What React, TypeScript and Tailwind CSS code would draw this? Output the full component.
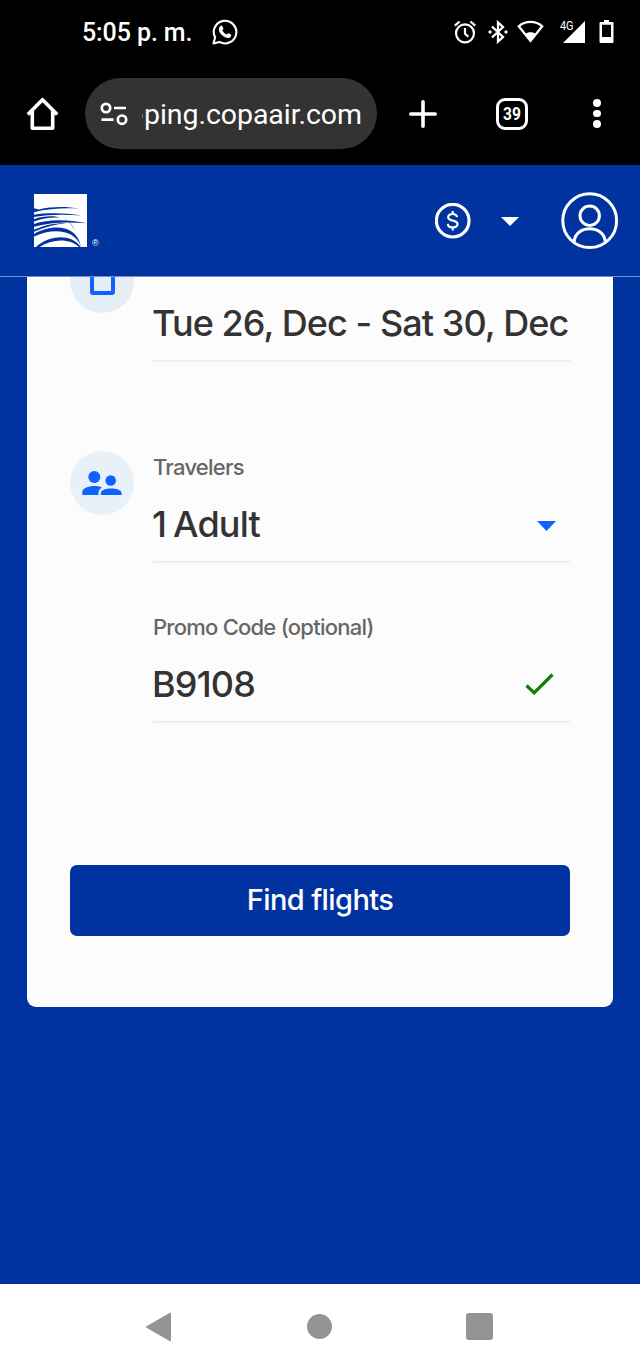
import type { ReactNode } from "react";

const StatusBar = () => {
    return (
        <div className="flex h-[64px] items-center pl-[82px] pr-[26px]">
            <span className="mt-[2px] w-[130px] whitespace-nowrap font-[Roboto] text-[25px] font-medium leading-8 tracking-[-0.1px]">5:05 p. m.</span>
            <svg className="h-[26px] w-[26px]" viewBox="0 0 26 26" fill="none">
                <path d="M1.5 24.5 3.1 18.4A11.3 11.3 0 1 1 7.5 22.9Z" stroke="#fff" strokeWidth="2.1" strokeLinejoin="round" />
                <path d="M8.7 6.8c.5-.5 1.3-.4 1.6.2l1.1 2.5c.2.5-.9 1.6-1 2 .8 1.8 2.4 3.2 4.2 4 .5-.1 1.4-1.5 1.9-1.3l2.5 1.3c.4.2.2 1.3-.2 1.9-1 1.6-3.1 1.9-4.9 1.2-3-1-5.7-3.6-6.7-6.3-.7-1.9-.2-4.2 1.5-5.5Z" fill="#fff" />
            </svg>
            <div className="ml-auto flex items-center">
                <svg className="h-6 w-[22px]" viewBox="0 0 22 24" fill="none" stroke="#fff" strokeWidth="2.2">
                    <circle cx="11" cy="13.3" r="9" />
                    <path d="M11 8v5.7l3.3 3M.8 5.6 5.6 1.5M21.2 5.6 16.4 1.5" />
                </svg>
                <svg className="ml-[12px] h-6 w-5" viewBox="0 0 20 24" fill="none" stroke="#fff" strokeWidth="2.3">
                    <path d="M4 6.5 15 17l-5 4.6V2.4L15 7 4 17.5" />
                    <circle cx="2" cy="12" r="1.2" fill="#fff" strokeWidth="1" />
                    <circle cx="18" cy="12" r="1.2" fill="#fff" strokeWidth="1" />
                </svg>
                <svg className="ml-[9px] h-6 w-[27px]" viewBox="0 0 27 24" fill="none">
                    <path d="M1.8 6.3C8.5.5 18.5.5 25.2 6.3L13.5 21Z" stroke="#fff" strokeWidth="2.2" />
                    <path d="M8 14.2c3-2.6 8-2.6 11 0L13.5 22Z" fill="#fff" />
                </svg>
                <div className="relative ml-[19px] h-6 w-[22px]">
                    <svg className="h-6 w-[22px]" viewBox="0 0 22 24">
                        <path d="M22 1v22H0Z" fill="#fff" />
                    </svg>
                    <span className="absolute -left-[3px] top-0 origin-left scale-x-[.84] font-[Roboto] text-[13px] leading-[12px] tracking-[-0.2px]">4G</span>
                </div>
                <svg className="ml-[14px] h-6 w-[15px]" viewBox="0 0 15 24">
                    <path fillRule="evenodd" d="M5 0h5v2h3.500q1 0 1 1v19q0 1-1 1h-12q-1 0-1-1V3q0-1 1-1H5ZM3 4.800V17h9V4.800Z" fill="#fff" />
                </svg>
            </div>
        </div>
    );
};

const BrowserBar = () => {
    return (
        <div className="mt-[14px] flex h-[71px] items-center">
            <svg className="ml-[26px] h-[34px] w-[33px]" viewBox="0 0 33 34" fill="none" stroke="#fff" strokeWidth="3.6" strokeLinejoin="round">
                <path d="M1.8 17.5 16.5 2.7 31.2 17.5M6.3 14v17.2h20.4V14" />
            </svg>
            <div className="ml-[26px] flex h-full w-[292px] items-center rounded-full bg-[#333333] pl-[15px]">
                <svg className="h-6 w-7" viewBox="0 0 28 24" fill="none" stroke="#fff" strokeWidth="2.7">
                    <circle cx="6" cy="6" r="4.2" />
                    <path d="M14 6h12M1.5 17.7h12" />
                    <circle cx="22" cy="17.7" r="4.2" />
                </svg>
                <span className="ml-[14px] mt-1 h-1 w-px bg-[#777]" />
                <span className="ml-px mt-[2px] whitespace-nowrap font-[Roboto] text-[28.5px] leading-9 tracking-[-0.06px]">ping.copaair.com</span>
            </div>
            <svg className="ml-8 h-7 w-7" viewBox="0 0 28 28" stroke="#fff" strokeWidth="3.6" strokeLinecap="round">
                <path d="M14 1.8v24.4M1.8 14h24.4" />
            </svg>
            <div className="ml-[59px] flex h-8 w-8 items-center justify-center rounded-[9px] border-[3.5px] border-white font-[Roboto] text-[19px] font-bold leading-none">
                <span className="-mt-px scale-x-[.82]">39</span>
            </div>
            <div className="ml-[65px] flex flex-col gap-[3px]">
                <span className="size-[7.5px] rounded-full bg-white" />
                <span className="size-[7.5px] rounded-full bg-white" />
                <span className="size-[7.5px] rounded-full bg-white" />
            </div>
        </div>
    );
};

const Logo = () => {
    return (
        <svg className="h-[53px] w-[53px]" viewBox="0 0 53 53" fill="#0032a0">
            <path d="M0 0h53v53H0Z" fill="#fff" />
            <path d="M0 14.3 5 15.4C18 12.4 33 12.3 45.500 14.8 33 13.700 15 14.500 0 18.200Z" />
            <path d="M0 20.700C13 18.600 31 18.700 47.500 21.600 31 20.300 14 20.600 0 23Z" />
            <path d="M0 25.200C9 22 19 21.500 26 23.600c-9-.6-17 .4-26 4Z" />
            <path d="M0 30C14 25 34 25.500 53 29.300 34 27.600 15 28.300 0 32.800Z" />
            <path d="M0 35.800C10 31 22 29 32 29 22 30.300 11 33 0 37.800Z" />
            <path d="M0 40C16 30.500 42 29 46.800 52 40.500 36 20 33.500 0 42.500Z" />
            <path d="M2 53C14 41.500 37 38.500 46.800 53h-1.800C36 44.200 18 44.500 5.500 53Z" />
            <path d="M15 16c11 3.500 22 11 26.500 21C35.500 27 27 19.500 15 16Z" />
        </svg>
    );
};

const SiteHeader = () => {
    return (
        <header className="flex h-[112px] items-center border-b border-[#6f8fd2] bg-[#0032a0] pl-[34px]">
            <Logo />
            <span className="ml-[5px] mt-[46px] w-[8px] font-['Liberation_Sans'] text-[9px] leading-none">®</span>
            <svg className="ml-[335px] h-9 w-9" viewBox="0 0 36 36" fill="none" stroke="#fff">
                <circle cx="17.7" cy="17.7" r="16.3" strokeWidth="3.2" />
                <path d="M22 14.2c-.3-2-2-3.200-4.500-3.200s-4.300 1.200-4.300 3.200c0 4.700 9.300 2 9.300 6.900 0 2-2 3.300-4.700 3.300-3 0-4.800-1.500-5-3.600M17.700 8v3M17.700 24.200v3.200" strokeWidth="2.2" />
            </svg>
            <svg className="ml-[30px] mt-[2px] h-[9px] w-[18px]" viewBox="0 0 18 9" fill="#fff">
                <path d="M0 0h18L9 9Z" />
            </svg>
            <svg className="ml-[42px] h-[58px] w-[58px]" viewBox="0 0 58 58" fill="none" stroke="#fff" strokeWidth="3">
                <circle cx="28.7" cy="28.7" r="26.9" />
                <circle cx="28.7" cy="23.700" r="9.7" />
                <path d="M13.2 50.200C13.2 32.400 44.2 32.400 44.2 50.200" />
            </svg>
        </header>
    );
};

type FieldProps = {
    label: string;
    value: string;
    icon?: ReactNode;
};

const Field = ({ label, value, icon }: FieldProps) => {
    return (
        <div className="h-[110px] w-[417px] border-b-2 border-[#eeeeee]">
            <p className="whitespace-nowrap text-[22px] font-medium leading-[29px] tracking-[-0.76px] text-[#666]">{label}</p>
            <div className="mt-[22px] flex h-10 items-center justify-between">
                <span className="-ml-px whitespace-nowrap text-[36px] font-medium leading-10 tracking-[-0.8px] [word-spacing:-2px]">{value}</span>
                {icon}
            </div>
        </div>
    );
};

const BookingCard = () => {
    return (
        <section className="mx-[27px] h-[730px] w-[586px] overflow-hidden rounded-b-[9px] bg-[#fcfcfc] px-[43px] font-[Inter] text-[#333]">
            <div className="flex">
                <div className="-mt-7 flex size-16 items-end justify-center rounded-full bg-[#e6eef5] pb-[18px]">
                    <div className="h-8 w-[25px] rounded-[3px] border-[4px] border-[#0f62fe]" />
                </div>
                <div className="ml-[19px] h-[85px] w-[417px] border-b-2 border-[#eeeeee] pt-[26px]">
                    <p className="-ml-px whitespace-nowrap text-[36px] font-medium leading-10 tracking-[-0.92px]">Tue 26, Dec - Sat 30, Dec</p>
                </div>
            </div>
            <div className="mt-[89px] flex">
                <div className="flex size-16 items-center justify-center rounded-full bg-[#e9f1f8]">
                    <svg className="h-6 w-10" viewBox="0 0 40 24" fill="#0f62fe">
                        <circle cx="12.3" cy="6" r="6" />
                        <circle cx="28.7" cy="9.5" r="5.3" />
                        <path d="M.3 24v-3.5C1 16 12 13 20 16.5c-2.7 1.500-4 3.800-3.500 7.500Z" />
                        <path d="M18.8 24v-2.300c.7-5.600 20-5.600 20.700 0V24Z" />
                    </svg>
                </div>
                <div className="ml-[19px] mt-[2px] flex flex-col gap-[50px]">
                    <Field
                        label="Travelers"
                        value="1 Adult"
                        icon={
                            <svg className="mr-[14px] mt-[3px] h-[10px] w-[19px]" viewBox="0 0 19 10" fill="#0f62fe">
                                <path d="M0 0h19L9.5 10Z" />
                            </svg>
                        }
                    />
                    <Field
                        label="Promo Code (optional)"
                        value="B9108"
                        icon={
                            <svg className="mr-4 h-[22px] w-[29px]" viewBox="0 0 29 22" fill="none" stroke="#0a800a" strokeWidth="3.2">
                                <path d="M1.5 12.5 9.2 19.8 27.5 1.5" />
                            </svg>
                        }
                    />
                </div>
            </div>
            <button className="mt-[142px] flex h-[71px] w-[500px] items-center justify-center rounded-[7px] bg-[#0032a0] pb-[2px] text-[29px] font-medium tracking-[-0.6px] text-white">
                Find flights
            </button>
        </section>
    );
};

const NavBar = () => {
    return (
        <nav className="flex h-[85px] items-center bg-white">
            <svg className="ml-[145px] h-[30px] w-[27px]" viewBox="0 0 27 30" fill="#949494" stroke="#949494" strokeWidth="2" strokeLinejoin="round">
                <path d="M2 15 25 1.8v26.4Z" />
            </svg>
            <span className="ml-[135px] size-[25px] rounded-full bg-[#949494]" />
            <span className="ml-[134.400px] size-[27px] rounded-[3px] bg-[#949494]" />
        </nav>
    );
};

const App = () => {
    return (
        <div className="flex h-[1369px] w-[640px] flex-col overflow-hidden bg-[#0032a0] text-white">
            <div className="h-[165px] shrink-0 bg-black">
                <StatusBar />
                <BrowserBar />
            </div>
            <SiteHeader />
            <main className="flex-1">
                <BookingCard />
            </main>
            <NavBar />
        </div>
    );
};

export default App;
